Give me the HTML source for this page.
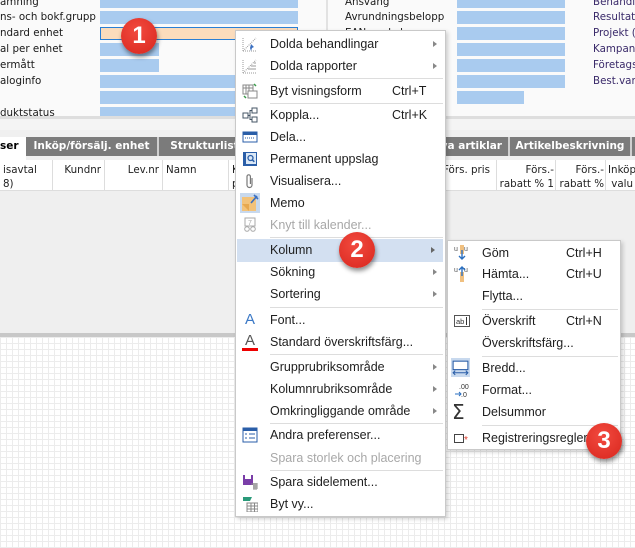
<!DOCTYPE html>
<html><head><meta charset="utf-8"><style>
*{margin:0;padding:0;box-sizing:border-box}
body{width:635px;height:548px;overflow:hidden;position:relative;background:#fff;font-family:"DejaVu Sans",Verdana,sans-serif}
.a{position:absolute}
.lbl{position:absolute;font-size:10.3px;color:#1a1a1a;white-space:nowrap}
.lblp{color:#3a2a6a}
.f{position:absolute;background:#a9cbef;height:13px}
.tab{position:absolute;top:137px;height:19px;background:#7b7b7b;color:#fff;font-weight:bold;font-size:10.5px;text-align:center;line-height:18px;border-right:2px solid #cfcfcf;white-space:nowrap;overflow:hidden}
.hc{position:absolute;top:160px;height:30px;border-right:1px solid #ddd;font-size:10.3px;color:#222;padding:3px 3px;line-height:14px;white-space:nowrap;overflow:hidden}
.menu{position:absolute;background:#fff;border:1px solid #c9c9c9;box-shadow:2px 2px 4px rgba(0,0,0,.18);font-family:"Liberation Sans",Arial,sans-serif;font-size:12.5px;color:#1e1e1e}
.it{position:absolute;left:0;right:0;height:22px;line-height:22px}
.it .t{position:absolute;left:34px}
.it .k{position:absolute}
.it .ar{position:absolute;right:8px;top:8px;width:0;height:0;border-left:4px solid #888;border-top:3.5px solid transparent;border-bottom:3.5px solid transparent}
.sep{position:absolute;left:34px;right:2px;height:1px;background:#ddd}
.dis{color:#a8a8a8}
.ic{position:absolute;left:6px;top:3px;width:16px;height:16px}
.badge{position:absolute;width:36px;height:36px;border-radius:50%;background:radial-gradient(circle at 45% 35%,#f24a3f,#d8261d);color:#fff;font-family:"Liberation Sans",Arial,sans-serif;font-weight:bold;font-size:24px;text-align:center;line-height:36px;box-shadow:1px 3px 5px rgba(0,0,0,.45)}
</style></head><body>
<div class="a" style="left:0;top:0;width:635px;height:130px;background:#fafafa"></div>
<div class="lbl" style="left:0;top:-4px">amning</div>
<div class="lbl" style="left:0;top:11px">ns- och bokf.grupp</div>
<div class="lbl" style="left:0;top:27px">ndard enhet</div>
<div class="lbl" style="left:0;top:43px">al per enhet</div>
<div class="lbl" style="left:0;top:59px">ermått</div>
<div class="lbl" style="left:0;top:75px">aloginfo</div>
<div class="lbl" style="left:0;top:107px">duktstatus</div>
<div class="f" style="left:100px;top:-5px;width:198px"></div>
<div class="f" style="left:100px;top:11px;width:198px"></div>
<div class="f" style="left:100px;top:27px;width:198px;background:#fbdcbc;border:1.5px solid #2a7fd4"></div>
<div class="f" style="left:100px;top:43px;width:59px"></div>
<div class="f" style="left:100px;top:59px;width:59px"></div>
<div class="f" style="left:100px;top:75px;width:198px"></div>
<div class="f" style="left:100px;top:91px;width:198px"></div>
<div class="f" style="left:100px;top:107px;width:198px"></div>
<div class="a" style="left:326px;top:0;width:2px;height:122px;background:#e2e2e2"></div>
<div class="lbl" style="left:345px;top:-4px">Ansvang</div>
<div class="lbl" style="left:345px;top:11px">Avrundningsbelopp</div>
<div class="lbl" style="left:345px;top:27px">EAN-nyckel</div>
<div class="f" style="left:457px;top:-5px;width:108px"></div>
<div class="f" style="left:457px;top:11px;width:108px"></div>
<div class="f" style="left:457px;top:27px;width:108px"></div>
<div class="f" style="left:457px;top:43px;width:108px"></div>
<div class="f" style="left:457px;top:59px;width:108px"></div>
<div class="f" style="left:457px;top:75px;width:108px"></div>
<div class="f" style="left:457px;top:91px;width:67px"></div>
<div class="lbl lblp" style="left:593px;top:-4px">Behandl</div>
<div class="lbl lblp" style="left:593px;top:11px">Resultat</div>
<div class="lbl lblp" style="left:593px;top:27px">Projekt (</div>
<div class="lbl lblp" style="left:593px;top:43px">Kampanj</div>
<div class="lbl lblp" style="left:593px;top:59px">Företags</div>
<div class="lbl lblp" style="left:593px;top:75px">Best.var</div>
<div class="a" style="left:0;top:116px;width:635px;height:3px;background:#dedede"></div>
<div class="a" style="left:0;top:119px;width:635px;height:11px;background:#f4f4f4"></div>
<div class="a" style="left:0;top:130px;width:635px;height:30px;background:#f0f0f0"></div>
<div class="a" style="left:0;top:137px;width:26px;height:23px;background:#fff;font-weight:bold;font-size:10.5px;line-height:18px">ser</div>
<div class="tab" style="left:26px;width:133px">Inköp/försälj. enhet</div>
<div class="tab" style="left:159px;width:100px">Strukturlista</div>
<div class="tab" style="left:420px;width:90px;text-align:right;padding-right:6px">va artiklar</div>
<div class="tab" style="left:510px;width:122px">Artikelbeskrivning</div>
<div class="tab" style="left:632px;width:10px"></div>
<div class="a" style="left:0;top:160px;width:635px;height:31px;background:#fff;border-bottom:1px solid #ddd"></div>
<div class="hc" style="left:0;width:53px">isavtal<br>8)</div>
<div class="hc" style="left:53px;width:52px;text-align:right">Kundnr</div>
<div class="hc" style="left:105px;width:58px;text-align:right">Lev.nr</div>
<div class="hc" style="left:163px;width:66px">Namn</div>
<div class="hc" style="left:229px;width:20px">K<br>p</div>
<div class="hc" style="left:440px;width:57px">Förs. pris</div>
<div class="hc" style="left:497px;width:59px;text-align:right;padding:3px 1px">Förs.-<br>rabatt % 1</div>
<div class="hc" style="left:556px;width:50px;text-align:right;padding:3px 1px">Förs.-<br>rabatt %</div>
<div class="hc" style="left:606px;width:40px;padding:3px 2px">Inköp<br>&nbsp;valu</div>
<div class="a" style="left:0;top:191px;width:635px;height:142px;background:#efefef"></div>
<div class="a" style="left:0;top:333px;width:635px;height:4px;background:#c8c8c8"></div>
<div class="a" style="left:0;top:337px;width:635px;height:211px;background-color:#fff;background-image:repeating-linear-gradient(90deg,#ececec 0 1px,transparent 1px 6px),repeating-linear-gradient(0deg,#ececec 0 1px,transparent 1px 6px)"></div>

<div class="menu" style="left:235px;top:30px;width:211px;height:487px">
<div class="it" style="top:2px"><svg class="ic" viewBox="0 0 16 16"><path d="M1 15V1M1 15h14M1 15L14 2" stroke="#999" stroke-dasharray="1 1" fill="none"/><path d="M9 8l3 3-2 1-1 3-1-3z" fill="#3a6fc0"/></svg><span class="t">Dolda behandlingar</span><span class="ar"></span></div>
<div class="it" style="top:24px"><svg class="ic" viewBox="0 0 16 16"><path d="M1 15V1M1 15h14M1 15L14 2" stroke="#999" stroke-dasharray="1 1" fill="none"/><path d="M6 11h8M9 8h5M12 5h2" stroke="#999"/></svg><span class="t">Dolda rapporter</span><span class="ar"></span></div>
<div class="sep" style="top:47px"></div>
<div class="it" style="top:49px"><svg class="ic" viewBox="0 0 16 16"><rect x="1" y="2" width="10" height="9" fill="none" stroke="#888"/><path d="M1 5h10M4 2v9M7 2v9" stroke="#888"/><rect x="6" y="8" width="9" height="7" fill="#fff" stroke="#888"/><path d="M2 13l2 2M12 1l2 2" stroke="#3a9a4a" stroke-width="1.5"/></svg><span class="t">Byt visningsform</span><span class="k" style="left:156px">Ctrl+T</span></div>
<div class="sep" style="top:72px"></div>
<div class="it" style="top:73px"><svg class="ic" viewBox="0 0 16 16"><rect x="1" y="6" width="5" height="5" fill="none" stroke="#456"/><rect x="10" y="1" width="5" height="5" fill="none" stroke="#456"/><rect x="10" y="10" width="5" height="5" fill="none" stroke="#456"/><path d="M6 8.5h2V3.5h2M8 8.5v4h2" stroke="#456" fill="none"/></svg><span class="t">Koppla...</span><span class="k" style="left:156px">Ctrl+K</span></div>
<div class="it" style="top:95px"><svg class="ic" viewBox="0 0 16 16"><rect x="1" y="3" width="14" height="10" fill="#fff" stroke="#2a5ea8"/><rect x="1" y="3" width="14" height="3" fill="#2a5ea8"/><path d="M3 9h10" stroke="#2a5ea8" stroke-dasharray="1 1"/></svg><span class="t">Dela...</span></div>
<div class="it" style="top:117px"><svg class="ic" viewBox="0 0 16 16"><rect x="1" y="1" width="14" height="14" fill="#2a5ea8"/><rect x="4" y="2" width="10" height="11" fill="#dbe8f6"/><circle cx="8.5" cy="7" r="2.5" fill="none" stroke="#2a5ea8" stroke-width="1.3"/><path d="M10.3 8.8l2 2" stroke="#2a5ea8" stroke-width="1.5"/></svg><span class="t">Permanent uppslag</span></div>
<div class="it" style="top:139px"><svg class="ic" viewBox="0 0 16 16"><path d="M10 5v7a2.5 2.5 0 0 1-5 0V3.5a1.7 1.7 0 0 1 3.4 0V11" stroke="#777" stroke-width="1.2" fill="none"/></svg><span class="t">Visualisera...</span></div>
<div class="it" style="top:161px"><svg class="ic" viewBox="0 0 20 20" style="left:4px;top:1px;width:20px;height:20px"><rect width="20" height="20" fill="#c8d9ee"/><rect x="2" y="4" width="14" height="14" fill="#f2c27a"/><path d="M2 11h7v7" fill="#e7a84f"/><path d="M11 10l6-7M14 2l4 4" stroke="#3a6fc0" stroke-width="1.6"/></svg><span class="t">Memo</span></div>
<div class="it dis" style="top:183px"><svg class="ic" viewBox="0 0 16 16"><rect x="3" y="1" width="10" height="8" fill="none" stroke="#aaa"/><text x="6" y="8" font-size="7" fill="#aaa" font-family="Liberation Sans">7</text><circle cx="5" cy="12" r="2.3" fill="none" stroke="#aaa"/><circle cx="11" cy="12" r="2.3" fill="none" stroke="#aaa"/></svg><span class="t">Knyt till kalender...</span></div>
<div class="sep" style="top:206px"></div>
<div class="it" style="top:208px;background:#d3e0f1;left:1px;right:2px;height:23px"><span class="t" style="left:33px">Kolumn</span><span class="ar" style="border-left-color:#666"></span></div>
<div class="it" style="top:230px"><span class="t">Sökning</span><span class="ar"></span></div>
<div class="it" style="top:252px"><span class="t">Sortering</span><span class="ar"></span></div>
<div class="sep" style="top:276px"></div>
<div class="it" style="top:278px"><span class="a" style="left:9px;top:0;color:#3a78c6;font-size:15px">A</span><span class="t">Font...</span></div>
<div class="it" style="top:300px"><span class="a" style="left:9px;top:-1px;color:#555;font-size:15px">A</span><span class="a" style="left:6px;top:17px;width:16px;height:3px;background:#e00"></span><span class="t">Standard överskriftsfärg...</span></div>
<div class="sep" style="top:323px"></div>
<div class="it" style="top:325px"><span class="t">Grupprubriksområde</span><span class="ar"></span></div>
<div class="it" style="top:347px"><span class="t">Kolumnrubriksområde</span><span class="ar"></span></div>
<div class="it" style="top:369px"><span class="t">Omkringliggande område</span><span class="ar"></span></div>
<div class="sep" style="top:392px"></div>
<div class="it" style="top:393px"><svg class="ic" viewBox="0 0 16 16"><rect x="1" y="1" width="14" height="14" fill="#fff" stroke="#2a5ea8"/><rect x="1" y="1" width="14" height="3" fill="#2a5ea8"/><path d="M3 7h2M7 7h6M3 11h2M7 11h6" stroke="#2a5ea8"/></svg><span class="t">Andra preferenser...</span></div>
<div class="it dis" style="top:416px"><span class="t">Spara storlek och placering</span></div>
<div class="sep" style="top:439px"></div>
<div class="it" style="top:440px"><svg class="ic" viewBox="0 0 16 16"><rect x="1" y="1" width="10" height="10" fill="#7a3ea8"/><rect x="3" y="1" width="6" height="4" fill="#fff"/><path d="M9 10h7M11 12h5M11 14h5M12 9v7M14 9v7" stroke="#888"/></svg><span class="t">Spara sidelement...</span></div>
<div class="it" style="top:462px"><svg class="ic" viewBox="0 0 16 16"><path d="M1 1h9l-2 4H1z" fill="#2a9a7a"/><rect x="5" y="7" width="11" height="9" fill="#fff" stroke="#888"/><path d="M5 10h11M5 13h11M9 7v9M12.5 7v9" stroke="#888"/></svg><span class="t">Byt vy...</span></div>
</div>

<div class="menu" style="left:447px;top:240px;width:174px;height:210px">
<div class="it" style="top:1px"><svg class="ic" viewBox="0 0 16 16"><text x="0" y="6" font-size="7" fill="#555" font-family="Liberation Sans">u</text><text x="10" y="6" font-size="7" fill="#555" font-family="Liberation Sans">u</text><rect x="6" y="0" width="4" height="9" fill="#f0c080"/><path d="M8 5v9M5 11l3 3 3-3" stroke="#2a6fc0" stroke-width="1.4" fill="none"/></svg><span class="t">Göm</span><span class="k" style="left:118px">Ctrl+H</span></div>
<div class="it" style="top:22px"><svg class="ic" viewBox="0 0 16 16"><text x="0" y="6" font-size="7" fill="#555" font-family="Liberation Sans">u</text><text x="10" y="6" font-size="7" fill="#555" font-family="Liberation Sans">u</text><rect x="6" y="6" width="4" height="10" fill="#f0c080"/><path d="M8 10V1M5 4l3-3 3 3" stroke="#2a6fc0" stroke-width="1.4" fill="none"/></svg><span class="t">Hämta...</span><span class="k" style="left:118px">Ctrl+U</span></div>
<div class="it" style="top:44px"><span class="t">Flytta...</span></div>
<div class="sep" style="top:68px"></div>
<div class="it" style="top:69px"><svg class="ic" viewBox="0 0 16 16"><rect x="0.5" y="2.5" width="15" height="11" fill="#fff" stroke="#555"/><text x="2" y="11" font-size="7.5" fill="#333" font-family="Liberation Sans">ab</text><path d="M12.5 4v8" stroke="#333"/></svg><span class="t">Överskrift</span><span class="k" style="left:118px">Ctrl+N</span></div>
<div class="it" style="top:91px"><span class="t">Överskriftsfärg...</span></div>
<div class="sep" style="top:115px"></div>
<div class="it" style="top:116px"><svg class="ic" viewBox="0 0 18 18" style="left:3px;top:1px;width:19px;height:19px"><rect width="18" height="18" fill="#c8d9ee"/><rect x="2" y="3" width="14" height="8" fill="#fff" stroke="#2a5ea8"/><path d="M2 14h14M4 12l-2 2 2 2M14 12l2 2-2 2" stroke="#2a5ea8" fill="none"/></svg><span class="t">Bredd...</span></div>
<div class="it" style="top:138px"><svg class="ic" viewBox="0 0 16 16"><text x="5" y="7" font-size="7" fill="#333" font-family="Liberation Sans">.00</text><text x="7" y="15" font-size="7" fill="#333" font-family="Liberation Sans">.0</text><path d="M1 12h6M5 10l2 2-2 2" stroke="#2a6fc0" fill="none"/></svg><span class="t">Format...</span></div>
<div class="it" style="top:160px"><span class="a" style="left:4px;top:0;font-size:20px;color:#333;font-family:'DejaVu Sans'">Σ</span><span class="t">Delsummor</span></div>
<div class="sep" style="top:184px"></div>
<div class="it" style="top:186px"><svg class="ic" viewBox="0 0 16 16"><rect x="0.5" y="4.5" width="9" height="8" fill="#fff" stroke="#444"/><text x="10" y="13" font-size="10" fill="#e03a2a" font-family="Liberation Sans">*</text></svg><span class="t">Registreringsregler...</span></div>
</div>

<div class="badge" style="left:121px;top:18px">1</div>
<div class="badge" style="left:339px;top:232px">2</div>
<div class="badge" style="left:586px;top:423px">3</div>
</body></html>
